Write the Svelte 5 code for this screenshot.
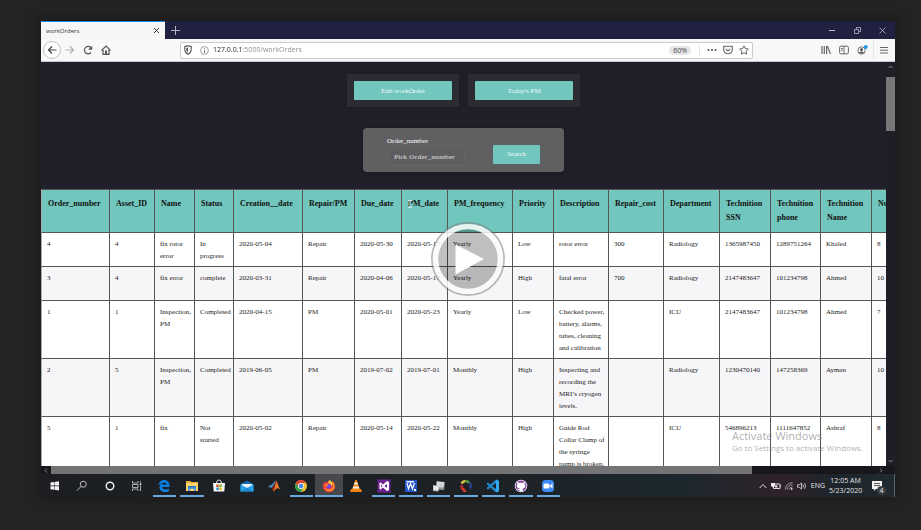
<script>
  const columns = [
    { title: 'Order_number', width: 68 },
    { title: 'Asset_ID', width: 45 },
    { title: 'Name', width: 40 },
    { title: 'Status', width: 39 },
    { title: 'Creation__date', width: 69 },
    { title: 'Repair/PM', width: 52 },
    { title: 'Due_date', width: 47 },
    { title: 'PM_date', width: 46 },
    { title: 'PM_frequency', width: 65 },
    { title: 'Priority', width: 41 },
    { title: 'Description', width: 55 },
    { title: 'Repair_cost', width: 55 },
    { title: 'Department', width: 56 },
    { title: 'Technition\nSSN', width: 51 },
    { title: 'Technition\nphone', width: 50 },
    { title: 'Technition\nName', width: 51 },
    { title: 'Number', width: 60 }
  ];

  const rows = [
    ['4', '4', 'fix rotor\nerror', 'In\nprogress', '2020-05-04', 'Repair', '2020-05-30', '2020-05-17', 'Yearly', 'Low', 'rotor error', '300', 'Radiology', '1365987450', '1289751264', 'Khaled', '8'],
    ['3', '4', 'fix error', 'complete', '2020-03-31', 'Repair', '2020-04-06', '2020-05-17', 'Yearly', 'High', 'fatal error', '700', 'Radiology', '2147483647', '101234798', 'Ahmed', '10'],
    ['1', '1', 'Inspection,\nPM', 'Completed', '2020-04-15', 'PM', '2020-05-01', '2020-05-23', 'Yearly', 'Low', 'Checked power,\nbattery, alarms,\ntubes, cleaning\nand calibration', '', 'ICU', '2147483647', '101234798', 'Ahmed', '7'],
    ['2', '5', 'Inspection,\nPM', 'Completed', '2019-06-05', 'PM', '2019-07-02', '2019-07-01', 'Monthly', 'High', 'Inspecting and\nrecording the\nMRI’s cryogen\nlevels.', '', 'Radiology', '1230470140', '147258369', 'Ayman', '10'],
    ['5', '1', 'fix', 'Not\nstarted', '2020-05-02', 'Repair', '2020-05-14', '2020-05-22', 'Monthly', 'High', 'Guide Rod\nCollar Clamp of\nthe syringe\npump is broken.', '', 'ICU', '546896213', '1111647852', 'Ashraf', '8']
  ];

  const apps = [
    { id: 'start', label: 'Start' },
    { id: 'search', label: 'Search' },
    { id: 'cortana', label: 'Cortana' },
    { id: 'tasks', label: 'Task view' },
    { id: 'edge', label: 'Edge', open: true },
    { id: 'files', label: 'File Explorer', open: true },
    { id: 'store', label: 'Store' },
    { id: 'mail', label: 'Mail' },
    { id: 'matlab', label: 'MATLAB' },
    { id: 'chrome', label: 'Chrome', open: true },
    { id: 'firefox', label: 'Firefox', open: true, active: true },
    { id: 'vlc', label: 'VLC' },
    { id: 'vs', label: 'Visual Studio', open: true },
    { id: 'word', label: 'Dictionary', open: true },
    { id: 'cards', label: 'Services', open: true },
    { id: 'ring', label: 'Designer', open: true },
    { id: 'code', label: 'VS Code', open: true },
    { id: 'github', label: 'GitHub Desktop', open: true },
    { id: 'zoom', label: 'Zoom', open: true }
  ];

  let address = $state('127.0.0.1:5000/workOrders');
  let orderNumber = $state('');
</script>

{#snippet appIcon(id)}
  <svg class="app-icon" viewBox="0 0 28 28" aria-hidden="true">
    {#if id === 'start'}
      <path fill="#f4f4f4" d="M5 7l7-1v7H5zM13 5.900l9-1.400V13h-9zM5 14.500h7v7l-7-1zM13 14.500h9V23l-9-1.400z" />
    {:else if id === 'search'}
      <g fill="none" stroke="#d0d0d0" stroke-width="1.800"><circle cx="16.500" cy="10.500" r="6" /><path d="M12 15l-8 8" /></g>
    {:else if id === 'cortana'}
      <circle cx="14" cy="14" r="7.500" fill="none" stroke="#f4f4f4" stroke-width="2.800" />
    {:else if id === 'tasks'}
      <g fill="none" stroke="#c4c4c4" stroke-width="1.700"><path d="M5 4v4h11V4M5 24v-4h11v4M5 11h11v6H5zM21 4v3M21 14v10" /></g>
      <rect x="19.500" y="8.500" width="3" height="4" fill="#e4e4e4" />
    {:else if id === 'edge'}
      <path fill="#0b7fe0" d="M3 13C4 5.500 9 2 14.500 2 21.500 2 25 7 25 12.500V16H10.500c.3 3.400 3.200 5 6.800 5 2.500 0 4.700-.7 6.500-1.700v5C21.700 25.500 19 26 16.200 26 9 26 5 21.800 5 16.500c0-4 2.200-7 5.500-8.700C7.500 8.500 5 10 3 13zM10.600 11.500h8.200c0-2.700-1.300-4.300-3.900-4.300-2.300 0-3.900 1.700-4.300 4.300z" />
    {:else if id === 'files'}
      <path fill="#e8b13a" d="M2 4h9l2 2h13v6H2z" />
      <path fill="#fbd36b" d="M2 8h24v16H2z" />
      <path fill="#4b9be0" d="M6 14h16v10h-4v-4h-8v4H6z" />
      <path fill="#2c76c0" d="M6 14h16v3H6z" />
    {:else if id === 'store'}
      <path fill="none" stroke="#f2f2f2" stroke-width="2" d="M9.500 9V6c0-5 9-5 9 0v3" />
      <path fill="#f6f6f6" d="M2 8h24l-1.500 17h-21z" />
      <path fill="#e8502e" d="M8.500 11h5v5h-5z" /><path fill="#7db82a" d="M14.500 11h5v5h-5z" />
      <path fill="#1c9be0" d="M8.500 17h5v5h-5z" /><path fill="#f4b51e" d="M14.500 17h5v5h-5z" />
    {:else if id === 'mail'}
      <path fill="#1467ae" d="M1 10L14 3l13 7v14H1z" />
      <path fill="#f2f8fc" d="M4 10h20v6l-10 6-10-6z" />
      <path fill="#2ba5e8" d="M1 10.500L14 18l13-7.500V25H1z" />
      <path fill="#1a86d2" d="M1 25l13-8 13 8z" />
    {:else if id === 'matlab'}
      <path fill="#3f8fc4" d="M2 15l8-4 4-5c2-2 3-3 4-3l-6 13-4 2z" />
      <path fill="#7a1f14" d="M8 18l4-3c3-4 4-9 6-12l1 13-7 9z" />
      <path fill="#ee7a2b" d="M18 3c3 4 5 12 8 18-4-3-6-3-8-1-2 2-3 4-6 5 3-6 5-13 6-22z" />
    {:else if id === 'chrome'}
      <circle cx="14" cy="14" r="12" fill="#f0c431" />
      <path fill="#dd4437" d="M3.600 8A12 12 0 0 1 24.400 8H14a6 6 0 0 0-5.200 9z" />
      <path fill="#2f9e55" d="M3.600 8A12 12 0 0 0 14 26l5.200-9A6 6 0 0 1 8.800 17z" />
      <circle cx="14" cy="14" r="5.800" fill="#f6f6f6" /><circle cx="14" cy="14" r="4.500" fill="#4a86e8" />
    {:else if id === 'firefox'}
      <path fill="#f5413f" d="M4 6c.5 1 1.500 1.500 3 1.500 2-1.500 3.500-1.500 5-1.500 1-2 2.500-3.500 4.500-4-1 2 .5 3 3 5 1-1 1-2 1-3 4 3 6 7 5.500 12C25.500 22.500 20.500 26.500 14 26.500S2 21.500 2 15c0-4 .7-6.500 2-9z" />
      <path fill="#ff9a1f" d="M16.500 2c-1 4 6.500 5 6 12-1 6-6 8-10 7-4-.5-7-3-7-6 0 6 4 9.500 9 9.500 6 0 10.500-4.500 10.500-10 0-4-1.500-7-4.500-10 0 1 0 2-1 3-2-1.500-3.500-3-3-5.500z" />
      <path fill="#ffd43d" d="M16.500 2c-3 1-4.500 3.500-4 6 3 0 6 3 6 6 4-3 2-7-.5-9-1-.8-1.500-2-1.500-3z" />
      <circle cx="13.500" cy="14.500" r="4.800" fill="#7542e5" />
      <path fill="#ff8a22" d="M6 11c3-2 5-1 8 0-1 2-4 1.500-4.500 3.500L6 15z" />
    {:else if id === 'vlc'}
      <path fill="#ee8212" d="M4 20h20l2 6H2z" /><path fill="#f48b18" d="M12.500 2h3L22 22H6z" />
      <path fill="#f6f1ea" d="M11 7h6l1.300 4H9.700zM8.500 15h11l1.300 4H7.200z" />
    {:else if id === 'vs'}
      <path fill="#6d2592" d="M1 1h26v26H1z" />
      <path fill="#fff" d="M20 4l4 2v16l-4 2-8-7-5 4-2-1V8l2-1 5 4zM8 11v6l3-3zM20 10l-5 4 5 4z" />
    {:else if id === 'word'}
      <path fill="#2456c9" d="M2 2h24v24H2z" /><path fill="#e9effd" d="M5 4h15v3H5z" />
      <path fill="none" stroke="#fff" stroke-width="2.400" d="M6 8l3 12 4-11 4 11 4-12" /><path fill="#fff" d="M20 20h4v4h-4z" />
    {:else if id === 'cards'}
      <path fill="#8c9699" d="M9 4l17 2-2 16-16-1z" /><path fill="#d9dddd" d="M10 5l14 2-1 10-14-1z" />
      <path fill="#b9bfc0" d="M2 12l12 2-1 11-11-1z" /><path fill="#eef0f0" d="M4 14l9 1-1 7-9-1z" />
      <path stroke="#9fa6a8" stroke-width="1.500" d="M15 10l4 4" />
    {:else if id === 'ring'}
      <g fill="none" stroke-width="5"><path stroke="#b72a2c" d="M5 12c-1 6 2 9 6 12" /><path stroke="#e0c545" d="M5 9c2-3 4-5 8-5" /><path stroke="#52a646" d="M13 4c4 0 6 2 7 4" /><path stroke="#293d82" d="M22 8c3 4 2 8-1 11" /></g>
      <path fill="#d83b32" d="M9 17l7 9h-6l-5-6z" />
    {:else if id === 'code'}
      <path fill="#1f8ad2" d="M20 1l6 3v20l-6 3L9 17l-5 4-2-1v-3l4-3-4-3V8l2-1 5 4zM20 8l-8 6 8 6z" />
      <path fill="#34a8ef" d="M20 1l6 3v20l-6 3z" />
    {:else if id === 'github'}
      <circle cx="14" cy="14" r="12.500" fill="#f4eef8" /><circle cx="14" cy="14" r="11" fill="#83439f" />
      <path fill="#fff" d="M7 6l4 2c2-.6 4-.6 6 0l4-2c.8 2 .6 3 .3 4 3 5 .5 9-4.300 9.500 1 1 1 2 1 5.500h-7v-3c-3 .5-4-1-5-3 1.500 0 2 1.500 5 1.200 0-.5.2-1 .6-1.400C6.500 18 4 15 6.700 10c-.4-1.300-.4-2.500.3-4z" />
    {:else}
      <rect x="2" y="2" width="24" height="24" rx="7" fill="#3d8bf5" />
      <rect x="5" y="9" width="12" height="10" rx="3" fill="#fff" /><path fill="#fff" d="M18 13l5-4v10l-5-4z" />
    {/if}
  </svg>
{/snippet}

<div class="stage">
  <div class="player">
    <header class="tabs">
      <div class="tab">
        <span>workOrders</span>
        <button class="plain" aria-label="Close tab"><svg width="7" height="7" viewBox="0 0 7 7"><path d="M1 1l5 5M6 1l-5 5" stroke="#333" /></svg></button>
      </div>
      <button class="plain new-tab" aria-label="New tab"><svg width="9" height="9" viewBox="0 0 9 9"><path d="M4.500 0v9M0 4.500h9" stroke="#b4b4c6" /></svg></button>
      <div class="window-controls">
        <button class="plain" aria-label="Minimize"><svg width="7" height="7" viewBox="0 0 7 7"><path d="M0 3.500h6" stroke="#b9b9c9" /></svg></button>
        <button class="plain" aria-label="Restore"><svg width="7" height="7" viewBox="0 0 7 7"><path d="M.5 2.500h4v4h-4zM2.500 2V.5h4v4H5" fill="none" stroke="#b9b9c9" stroke-width=".8" /></svg></button>
        <button class="plain" aria-label="Close"><svg width="7" height="7" viewBox="0 0 7 7"><path d="M.5.5l6 6M6.500.5l-6 6" stroke="#b9b9c9" stroke-width=".8" /></svg></button>
      </div>
    </header>

    <nav class="toolbar">
      <div class="nav-buttons">
        <button class="plain back" aria-label="Back"><svg width="10" height="10" viewBox="0 0 10 10"><path d="M9.500 5H1.500M5 1.500L1.500 5 5 8.500" fill="none" stroke="#444" stroke-width="1.200" /></svg></button>
        <button class="plain" aria-label="Forward"><svg width="10" height="10" viewBox="0 0 10 10"><path d="M.5 5h8M5 1.500L8.500 5 5 8.500" fill="none" stroke="#b0b0b0" stroke-width="1.200" /></svg></button>
        <button class="plain" aria-label="Reload"><svg width="10" height="10" viewBox="0 0 10 10"><path d="M8 7.500A3.700 3.700 0 1 1 7.800 2.600" fill="none" stroke="#555" stroke-width="1.200" /><path d="M9.200.8v4H5.200z" fill="#555" /></svg></button>
        <button class="plain" aria-label="Home"><svg width="10" height="10" viewBox="0 0 10 10"><path d="M.5 5.500L5 1l4.500 4.500M2 5v4.300h6V5" fill="none" stroke="#555" stroke-width="1.200" /><path d="M4 5.500h2v4H4z" fill="#555" /></svg></button>
      </div>
      <div class="address">
        <svg width="8" height="10" viewBox="0 0 8 10"><path d="M.8 1.500Q4 .2 7.200 1.500V4.500Q7 8 4 9.300 1 8 .8 4.500z" fill="none" stroke="#555" stroke-width="1.100" /><path d="M4 2.500v5Q2.300 6.500 2.300 4.500V3z" fill="#555" /></svg>
        <svg width="9" height="9" viewBox="0 0 9 9"><circle cx="4.500" cy="4.500" r="3.900" fill="none" stroke="#888" stroke-width=".8" /><path d="M4.500 4v3M4.500 2.200v1" stroke="#777" /></svg>
        <input aria-label="Address" bind:value={address} />
        <span class="zoom-level">60%</span>
        <div class="address-actions">
          <button class="plain" aria-label="Page actions"><svg width="10" height="10" viewBox="0 0 10 10"><g fill="#555"><circle cx="1.500" cy="5" r="1.100" /><circle cx="5" cy="5" r="1.100" /><circle cx="8.500" cy="5" r="1.100" /></g></svg></button>
          <button class="plain" aria-label="Save to Pocket"><svg width="10" height="10" viewBox="0 0 10 10"><path d="M.7 1.300h8.600V4.500a4.300 4.300 0 0 1-8.600 0zM2.800 3.800L5 6l2.200-2.200" fill="none" stroke="#666" stroke-width="1.100" /></svg></button>
          <button class="plain" aria-label="Bookmark"><svg width="10" height="10" viewBox="0 0 10 10"><path d="M5 .8l1.300 2.800 3 .4-2.200 2.100.5 3L5 7.700 2.400 9.100l.5-3L.7 4l3-.4z" fill="none" stroke="#666" /></svg></button>
        </div>
      </div>
      <div class="tools">
        <button class="plain" aria-label="Library"><svg width="10" height="10" viewBox="0 0 10 10"><path d="M1 1v8M3.300 1v8M5.600 1v8M6.500 1.200L9.500 9" stroke="#666" stroke-width="1.200" /></svg></button>
        <button class="plain" aria-label="Sidebar"><svg width="10" height="10" viewBox="0 0 10 10"><rect x=".6" y="1.200" width="8.800" height="7.600" rx="1.200" fill="none" stroke="#666" /><path d="M5 1v8M2 3.500h2M2 5.200h2" stroke="#666" stroke-width=".9" /></svg></button>
        <button class="plain" aria-label="Account"><svg width="11" height="10" viewBox="0 0 11 10"><circle cx="4.500" cy="5.500" r="3.700" fill="none" stroke="#666" stroke-width=".9" /><circle cx="4.500" cy="4.500" r="1.500" fill="#555" /><path d="M2 7.500q2.500-2 5 0-2.500 2.200-5 0z" fill="#555" /><circle cx="8.800" cy="2" r="1.900" fill="#1d9bf0" /></svg></button>
        <button class="plain menu" aria-label="Menu"><svg width="8" height="8" viewBox="0 0 8 8"><path d="M0 1.500h8M0 4.200h8M0 7h8" stroke="#666" /></svg></button>
      </div>
    </nav>

    <div class="viewport">
      <main class="page">
        <section class="controls">
          <div class="actions">
            <div class="card"><button class="teal">Edit workOrder</button></div>
            <div class="card"><button class="teal">Today's PM</button></div>
          </div>
          <form class="search" onsubmit={(e) => e.preventDefault()}>
            <div class="field">
              <label for="order">Order_number</label>
              <input id="order" placeholder="Pick Order_number" bind:value={orderNumber} />
            </div>
            <button class="teal">Search</button>
          </form>
        </section>
        <div class="table-wrap">
          <table>
            <colgroup>
              {#each columns as column}<col style="width: {column.width}px" />{/each}
            </colgroup>
            <thead>
              <tr>{#each columns as column}<th scope="col">{column.title}</th>{/each}</tr>
            </thead>
            <tbody>
              {#each rows as row}
                <tr>{#each row as cell}<td>{cell}</td>{/each}</tr>
              {/each}
            </tbody>
          </table>
        </div>
      </main>
      <div class="v-scroll">
        <svg width="5" height="4" viewBox="0 0 5 4"><path d="M.5 3L2.500 1l2 2" fill="none" stroke="#8a8a8f" /></svg>
        <div class="v-thumb"></div>
        <svg width="5" height="4" viewBox="0 0 5 4"><path d="M.5 1l2 2 2-2" fill="none" stroke="#8a8a8f" /></svg>
      </div>
      <svg class="cursor" width="4" height="8" viewBox="0 0 4 8" aria-hidden="true"><path d="M0 .5h4M0 7.500h4M2 .5v7" stroke="#d6e4e2" /></svg>
      <div class="watermark"><p class="big">Activate Windows</p><p>Go to Settings to activate Windows.</p></div>
    </div>

    <div class="h-scroll">
      <svg width="4" height="5" viewBox="0 0 4 5"><path d="M3 .5l-2 2 2 2" fill="none" stroke="#8a8a8f" /></svg>
      <div class="h-track"><div class="h-thumb"></div></div>
      <svg width="4" height="5" viewBox="0 0 4 5"><path d="M1 .5l2 2-2 2" fill="none" stroke="#8a8a8f" /></svg>
    </div>

    <footer class="taskbar">
      <div class="apps">
        {#each apps as app}
          <button class="plain app" class:open={app.open} class:active={app.active} aria-label={app.label}>{@render appIcon(app.id)}</button>
        {/each}
      </div>
      <div class="tray">
        <svg width="8" height="6" viewBox="0 0 8 6"><path d="M.7 5L4 1.500 7.300 5" fill="none" stroke="#ddd" /></svg>
        <svg width="10" height="8" viewBox="0 0 10 8"><path d="M2.500 2h6.500v4.500H2.500zM9.500 3.500v1.500" fill="none" stroke="#ddd" /><path d="M0 1h4v3L2 5.500 0 4zM4 3.500h2.500V5.500H4z" fill="#eee" /></svg>
        <svg width="8" height="8" viewBox="0 0 8 8"><g fill="none" stroke="#aaa" stroke-width=".9"><path d="M.5 7.500Q.5 1 7.500.8M2.500 7.500Q2.500 3 7.500 2.900M4.500 7.500Q4.500 5 7.500 4.900" /></g><circle cx="6.700" cy="7" r=".9" fill="#ddd" /></svg>
        <svg width="10" height="8" viewBox="0 0 10 8"><path d="M.5 2.800h1.700L4.500 1v6L2.200 5.200H.5zM6 2.500q1 1.500 0 3M7.500 1.200q2.200 2.800 0 5.600" fill="none" stroke="#ccc" stroke-width=".9" /></svg>
        <span>ENG</span>
        <div class="clock"><span>12:05 AM</span><span>5/23/2020</span></div>
        <button class="plain notice" aria-label="Notifications">
          <svg width="10" height="10" viewBox="0 0 10 10"><path fill="#f2f2f2" d="M0 0h10v8H4L2 10V8H0z" /><path stroke="#333" stroke-width=".8" d="M2 2.500h6M2 4.500h6" /></svg>
          <span class="count">4</span>
        </button>
      </div>
    </footer>

    <button class="plain play" aria-label="Play video">
      <svg width="76" height="76" viewBox="0 0 76 76">
        <circle cx="38" cy="38" r="30" fill="#000" fill-opacity=".25" />
        <circle cx="38" cy="38" r="36" fill="none" stroke="#777" stroke-opacity=".5" stroke-width="2" />
        <circle cx="38" cy="38" r="32.500" fill="none" stroke="#fafafa" stroke-opacity=".85" stroke-width="5.500" />
        <path d="M25.500 23.500v30L54 38z" fill="#fff" />
      </svg>
    </button>
  </div>
</div>

<style>
  :global(body) { margin: 0; background: #242424; }
  .stage {
    box-sizing: border-box;
    height: 100vh;
    padding: 21px 26px 33px 41px;
    display: flex;
    background: #242424;
    font-family: "Open Sans", "Noto Sans", sans-serif;
    font-size: 7px;
    line-height: 10px;
  }
  .player {
    position: relative;
    flex: 1;
    min-width: 0;
    display: flex;
    flex-direction: column;
    box-shadow: 0 0 12px 4px #1c1c1c;
  }
  button, input { font: inherit; }
  svg { display: block; }
  .plain {
    display: flex;
    align-items: center;
    justify-content: center;
    padding: 0;
    border: 0;
    background: none;
    color: inherit;
  }
  .tabs { display: flex; height: 18px; background: #202040; }
  .tab {
    box-sizing: border-box;
    width: 124px;
    padding: 0 5px;
    display: flex;
    align-items: center;
    justify-content: space-between;
    border-top: 1px solid #1c87e0;
    background: #f6f6f7;
    color: #333;
    font-size: 6px;
  }
  .new-tab { width: 20px; }
  .window-controls { margin-left: auto; padding-right: 9px; display: flex; gap: 18px; }
  .toolbar {
    box-sizing: border-box;
    height: 23px;
    display: flex;
    align-items: center;
    background: #f8f8f9;
    border-bottom: 1px solid #c8c8cc;
  }
  .nav-buttons { box-sizing: border-box; width: 139px; padding-left: 2px; display: flex; align-items: center; gap: 8px; }
  .back { box-sizing: border-box; width: 18px; height: 18px; margin-right: -4px; border: 1px solid #c4c4c4; border-radius: 50%; background: #fff; }
  .address {
    box-sizing: border-box;
    flex: 1;
    min-width: 0;
    height: 17px;
    padding: 0 3px;
    display: flex;
    align-items: center;
    gap: 8px;
    border: 1px solid #cbcbcf;
    border-radius: 2px;
    background: #fff;
  }
  .address input {
    flex: 1;
    min-width: 0;
    padding: 0;
    margin-left: -4px;
    border: 0;
    color: transparent;
    background: linear-gradient(90deg, #222 30px, #888 30px);
    background-clip: text;
  }
  .zoom-level { padding: 0 4px; border-radius: 5px; background: #e6e6e8; color: #444; line-height: 9px; }
  .address-actions { padding-left: 7px; display: flex; gap: 6px; border-left: 1px solid #e2e2e4; }
  .tools { box-sizing: border-box; width: 142px; padding-right: 7px; display: flex; justify-content: flex-end; align-items: center; gap: 8px; }
  .menu { margin-left: -3px; padding-left: 6px; height: 20px; border-left: 1px solid #e6e6e8; }

  .viewport { position: relative; flex: 1; min-height: 0; display: flex; background: #211f2a; }
  .page {
    flex: 1;
    min-width: 0;
    overflow: hidden;
    font-family: "Liberation Serif", serif;
    line-height: 12px;
  }
  .controls {
    box-sizing: border-box;
    height: 127px;
    padding-top: 12px;
    display: flex;
    flex-direction: column;
    align-items: center;
    gap: 21px;
  }
  .actions { display: flex; gap: 9px; }
  .card { padding: 7px; background: #2c2b32; box-shadow: 0 0 4px #1c1b24; }
  .teal { height: 19px; padding: 0; border: 0; border-radius: 1px; background: #71c6bd; color: #f3fbfa; }
  .card .teal { display: block; width: 98px; }
  .search {
    box-sizing: border-box;
    width: 201px;
    padding: 7px 24px 6px;
    display: flex;
    align-items: center;
    justify-content: space-between;
    border-radius: 4px;
    background: #606062;
    box-shadow: 0 1px 5px #1a1920;
  }
  .search .teal { width: 47px; margin-top: 7px; }
  .field { display: flex; flex-direction: column; color: #fff; }
  .field input {
    box-sizing: border-box;
    width: 78px;
    height: 19px;
    padding: 0 6px;
    border: 1px solid #656567;
    border-radius: 2px;
    background: #5e5e60;
    color: #fff;
  }
  .field input::placeholder { color: #bdbdbf; font-weight: bold; opacity: 1; }

  .table-wrap { overflow: hidden; }
  table { table-layout: fixed; width: 890px; border-spacing: 0; background: #fff; color: #222; }
  th, td {
    box-sizing: border-box;
    padding: 5px 0 5px 5px;
    border-left: 1px solid #555;
    border-top: 1px solid #555;
    text-align: left;
    vertical-align: top;
    white-space: pre;
  }
  td { height: 34px; padding-bottom: 4px; }
  th { height: 43px; padding: 7px 0 7px 6px; background: #71c6bd; color: #111; font-size: 8px; line-height: 14px; }
  tbody tr:nth-child(even) { background: #f6f5f7; }
  th:first-child, td:first-child { border-left-color: #aaa; }

  .v-scroll { width: 9px; padding: 3px 0; box-sizing: border-box; display: flex; flex-direction: column; align-items: center; background: #1f1e27; }
  .v-thumb { width: 9px; height: 54px; margin: 8px 0 auto; background: #77777a; }
  .cursor { position: absolute; left: 367px; top: 138px; }
  .watermark { position: absolute; right: 32px; bottom: 12px; color: rgba(130, 130, 130, .65); font-size: 8px; line-height: 12px; white-space: nowrap; }
  .watermark p { margin: 0; }
  .watermark .big { font-size: 11px; }
  .h-scroll { height: 8px; padding: 0 12px 0 3px; display: flex; align-items: center; gap: 3px; background: #18181c; }
  .h-track { flex: 1; }
  .h-thumb { width: 85%; height: 8px; background: #747477; }

  .taskbar { height: 23px; display: flex; justify-content: space-between; background: linear-gradient(90deg, #1c1e22, #1d2227 55%, #1c282d 75%, #30212a 87%, #1c252b 93%, #202b31); color: #e4e4e4; }
  .apps { width: 521px; display: grid; grid-template-columns: repeat(19, 1fr); }
  .app { position: relative; }
  .app-icon { width: 14px; height: 14px; }
  .app.open::after { content: ''; position: absolute; left: 2px; right: 2px; bottom: 0; height: 2px; background: #6aa9dd; }
  .app.active { background: #46484c; }
  .app.active::after { left: 0; right: 0; }
  .tray { padding-right: 6px; display: flex; align-items: center; gap: 4px; border-right: 1px solid #59636a; }
  .clock { width: 33px; display: flex; flex-direction: column; text-align: center; }
  .notice { position: relative; width: 22px; height: 20px; }
  .count { position: absolute; right: 2px; bottom: 1px; width: 9px; border-radius: 5px; background: #3a3e42; line-height: 9px; }
  .play { position: absolute; left: calc(50% - 38px); top: calc(50% - 38px); border-radius: 50%; }
</style>
